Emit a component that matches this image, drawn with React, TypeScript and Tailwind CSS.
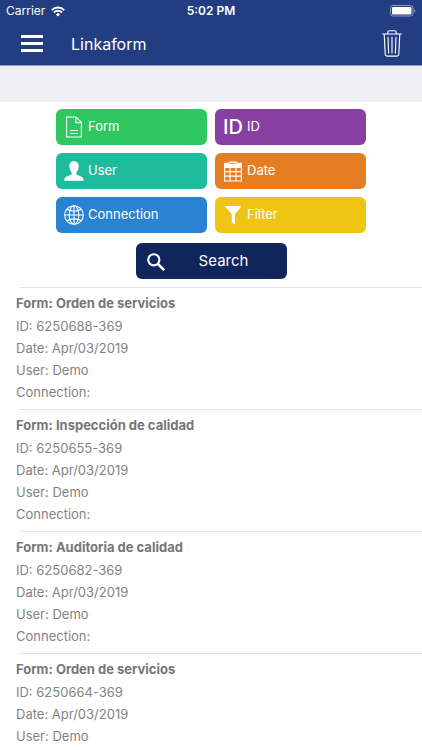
import React from 'react';

interface FormRecord {
    form: string;
    id: string;
    date: string;
    user: string;
    connection?: string;
}

interface FilterOption {
    label: string;
    color: string;
    icon: React.ReactNode;
}

const records: FormRecord[] = [
    { form: 'Orden de servicios', id: '6250688-369', date: 'Apr/03/2019', user: 'Demo', connection: '' },
    { form: 'Inspección de calidad', id: '6250655-369', date: 'Apr/03/2019', user: 'Demo', connection: '' },
    { form: 'Auditoria de calidad', id: '6250682-369', date: 'Apr/03/2019', user: 'Demo', connection: '' },
    { form: 'Orden de servicios', id: '6250664-369', date: 'Apr/03/2019', user: 'Demo' },
];

const WifiIcon = () => (
    <svg width="14" height="11" viewBox="0 0 14 11" fill="none" stroke="white" strokeWidth="1.9" aria-hidden="true">
        <path d="M0.7 4.1a9 9 0 0 1 12.6 0" />
        <path d="M2.9 6.5a5.8 5.8 0 0 1 8.2 0" />
        <path d="M7 10.6 4.8 8.3a3.2 3.2 0 0 1 4.4 0z" fill="white" stroke="none" />
    </svg>
);

const BatteryIcon = () => (
    <svg width="27" height="12" viewBox="0 0 27 12" aria-hidden="true">
        <rect x="1.5" y="0.5" width="22.5" height="10.5" rx="2.5" fill="none" stroke="#8c9bc5" />
        <rect x="3" y="2" width="19.5" height="7.5" rx="1" fill="white" />
        <path d="M25.2 4v3.600c.8-.3 1.200-.9 1.200-1.800S26 4.300 25.200 4z" fill="#8c9bc5" />
    </svg>
);

const TrashIcon = () => (
    <svg width="20" height="27" viewBox="0 0 20 27" fill="none" stroke="white" strokeWidth="1.1" strokeLinecap="round" strokeLinejoin="round" aria-hidden="true">
        <path d="M0.8 4h18.4" />
        <path d="M5.8 3.800V2.300a1.500 1.500 0 0 1 1.500-1.500h5.400a1.500 1.500 0 0 1 1.500 1.500v1.500" />
        <path d="M2.200 4.200l1 20a2 2 0 0 0 2 1.900h9.600a2 2 0 0 0 2-1.900l1-20" />
        <path d="M6 7.200l.6 15.800M10 7.200V23M14 7.200l-.6 15.800" />
    </svg>
);

const DocumentIcon = () => (
    <svg width="20" height="22" viewBox="0 0 20 22" fill="none" stroke="white" strokeWidth="1.1" aria-hidden="true">
        <path d="M2.600 1h9.400l5.400 5.400v14.600H2.600z" />
        <path d="M11.800 1v5.600h5.600" />
        <path d="M6 14.500h8M6 17.500h8" />
    </svg>
);

const UserIcon = () => (
    <svg width="20" height="20" viewBox="0 0 20 20" fill="white" aria-hidden="true">
        <path d="M10 .3c-3.200 0-4.900 2.100-4.700 5 .1 2.700 1 4.900 2.400 6.200v1.700c-1 1-3.400 1.500-5 2.300C1 16.300.3 17.500.3 19.700h19.400c0-2.200-.7-3.400-2.400-4.200-1.600-.8-4-1.300-5-2.300v-1.700c1.400-1.300 2.300-3.500 2.400-6.200.2-2.900-1.500-5-4.700-5z" />
    </svg>
);

const GlobeIcon = () => (
    <svg width="20" height="20" viewBox="0 0 20 20" fill="none" stroke="white" strokeWidth="1.1" aria-hidden="true">
        <circle cx="10" cy="10" r="9.3" />
        <ellipse cx="10" cy="10" rx="4.8" ry="9.3" />
        <path d="M10 .7v18.600M.7 10h18.600" />
        <path d="M2.800 4.300c4 2.500 10.400 2.500 14.400 0M2.800 15.700c4-2.500 10.400-2.500 14.400 0" />
    </svg>
);

const CalendarIcon = () => (
    <svg width="20" height="21" viewBox="0 0 20 21" aria-hidden="true">
        <path d="M1 1.800h5V.4h8v1.400h5V7H1z" fill="white" />
        <path d="M6 2.500h8" stroke="#e57e22" strokeWidth=".7" />
        <path d="M1.600 6v14h16.800V6M7 6v14M13 6v14M1.600 10.600h16.800M1.600 15.200h16.800" fill="none" stroke="white" strokeWidth="1.2" />
    </svg>
);

const FunnelIcon = () => (
    <svg width="20" height="20" viewBox="0 0 20 20" fill="white" aria-hidden="true">
        <path d="M2.300 1h15.600c0 1-.4 1.700-1.200 2.600L12 9.300V19.600L8.800 17.400V9.300L3.800 3.600C2.900 2.700 2.400 2 2.300 1z" />
    </svg>
);

const SearchIcon = () => (
    <svg width="18" height="20" viewBox="0 0 18 20" fill="none" stroke="white" strokeWidth="2.1" aria-hidden="true">
        <circle cx="6.8" cy="8.8" r="5.6" />
        <path d="M11 13l6.200 6.200" strokeWidth="2.5" />
    </svg>
);

const filters: FilterOption[] = [
    { label: 'Form', color: 'bg-[#2fc75f]', icon: <DocumentIcon /> },
    { label: 'ID', color: 'bg-[#883fa4]', icon: <span aria-hidden="true" className="text-[20px] font-medium">ID</span> },
    { label: 'User', color: 'bg-[#1ebc9c]', icon: <UserIcon /> },
    { label: 'Date', color: 'bg-[#e57e22]', icon: <CalendarIcon /> },
    { label: 'Connection', color: 'bg-[#2a82d2]', icon: <GlobeIcon /> },
    { label: 'Filter', color: 'bg-[#f0c413]', icon: <FunnelIcon /> },
];

const Header = () => (
    <header className="bg-[#233d83] text-white border-b border-[#8e9bc4]">
        <div className="grid grid-cols-3 items-center h-[22px] px-1.5 text-[12px]">
            <div className="flex items-center gap-1.5">
                <span>Carrier</span>
                <WifiIcon />
            </div>
            <span className="text-center font-semibold">5:02 PM</span>
            <div className="flex justify-end">
                <BatteryIcon />
            </div>
        </div>
        <div className="flex items-center h-[43px] pl-[21px] pr-5">
            <button type="button" aria-label="Menu" className="flex flex-col gap-1 w-[22px]">
                <span className="h-[3px] bg-white" />
                <span className="h-[3px] bg-white" />
                <span className="h-[3px] bg-white" />
            </button>
            <h1 className="flex-1 ml-7 text-[16px]">Linkaform</h1>
            <button type="button" aria-label="Delete">
                <TrashIcon />
            </button>
        </div>
    </header>
);

const RecordItem: React.FC<{ record: FormRecord }> = ({ record }) => (
    <li>
        <div className="ml-5 border-t border-[#e2e2e4]" />
        <div className="px-4 pt-[3px] pb-1.5 text-[13px] leading-[22px] text-[#838383]">
            <h2 className="font-bold leading-6 text-[#767676]">Form: {record.form}</h2>
            <p>ID: {record.id}</p>
            <p>Date: {record.date}</p>
            <p>User: {record.user}</p>
            {record.connection !== undefined && <p>Connection: {record.connection}</p>}
        </div>
    </li>
);

const App: React.FC = () => {
    return (
        <div className="flex flex-col h-screen bg-white font-['Inter',sans-serif]">
            <Header />
            <div className="shrink-0 h-9 bg-[#efeef4]" />

            <div className="flex flex-col items-center pt-[7px] pb-2">
                <div className="grid grid-cols-2 gap-2 w-full px-14">
                    {filters.map(filter => (
                        <button
                            key={filter.label}
                            type="button"
                            className={`flex items-center h-9 pl-2 rounded-md text-[13px] text-white ${filter.color}`}
                        >
                            <span className="flex justify-center w-5 mr-1">{filter.icon}</span>
                            {filter.label}
                        </button>
                    ))}
                </div>
                <button type="button" className="flex items-center w-[151px] h-9 mt-2.5 pl-[11px] pr-2 rounded-md bg-[#10255b] text-white text-[15px]">
                    <SearchIcon />
                    <span className="flex-1 pl-1 text-center">Search</span>
                </button>
            </div>

            <ul className="flex-1 min-h-0 overflow-y-auto [scrollbar-width:none]">
                {records.map(record => (
                    <RecordItem key={record.id} record={record} />
                ))}
            </ul>
        </div>
    );
};

export default App;
